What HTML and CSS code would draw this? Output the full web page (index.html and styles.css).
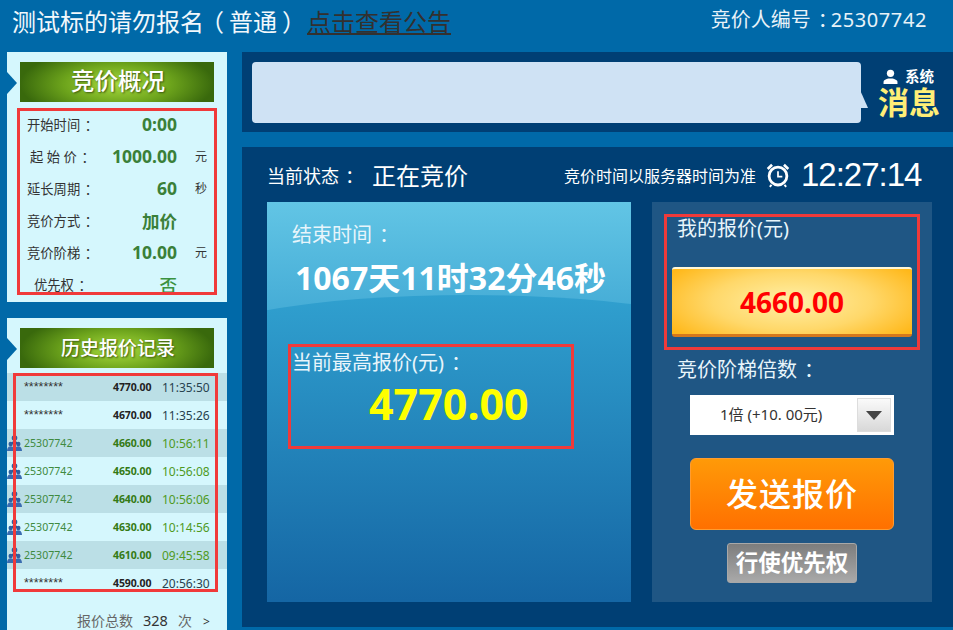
FILE: index.html
```html
<!DOCTYPE html>
<html lang="zh">
<head>
<meta charset="utf-8">
<title>竞价</title>
<link rel="stylesheet" href="styles.css">
</head>
<body>
<div class="page">
  <header class="top">
    <div class="title">测试标的请勿报名<span class="pl">（</span>普通<span class="pr">）</span><a class="notice">点击查看公告</a></div>
    <div class="bidder">竞价人编号<span class="c">：</span><span class="bidno">25307742</span></div>
  </header>
  <div class="main">
    <aside class="side">
      <section class="card overview">
        <h2 class="bar">竞价概况</h2>
        <div class="info">
          <div class="info-row"><span class="lab">开始时间<span class="c">：</span></span><b class="val">0:00</b><span class="unit"></span></div>
          <div class="info-row"><span class="lab lab-b">起 始 价<span class="c">：</span></span><b class="val">1000.00</b><span class="unit">元</span></div>
          <div class="info-row"><span class="lab">延长周期<span class="c">：</span></span><b class="val">60</b><span class="unit">秒</span></div>
          <div class="info-row"><span class="lab">竞价方式<span class="c">：</span></span><b class="val">加价</b><span class="unit"></span></div>
          <div class="info-row"><span class="lab">竞价阶梯<span class="c">：</span></span><b class="val">10.00</b><span class="unit">元</span></div>
          <div class="info-row"><span class="lab lab-c">优先权<span class="c">：</span></span><span class="val val-no">否</span><span class="unit"></span></div>
        </div>
        <div class="redbox box-info"></div>
      </section>
      <section class="card history">
        <h2 class="bar bar-sm">历史报价记录</h2>
        <div class="rows">
          <div class="row dark"><span class="who stars">********</span><b class="amt">4770.00</b><span class="tm">11:35:50</span></div>
          <div class="row"><span class="who stars">********</span><b class="amt">4670.00</b><span class="tm">11:35:26</span></div>
          <div class="row dark mine"><svg class="ppl" viewBox="0 0 15 16"><use href="#ppl"/></svg><span class="who">25307742</span><b class="amt">4660.00</b><span class="tm">10:56:11</span></div>
          <div class="row mine"><svg class="ppl" viewBox="0 0 15 16"><use href="#ppl"/></svg><span class="who">25307742</span><b class="amt">4650.00</b><span class="tm">10:56:08</span></div>
          <div class="row dark mine"><svg class="ppl" viewBox="0 0 15 16"><use href="#ppl"/></svg><span class="who">25307742</span><b class="amt">4640.00</b><span class="tm">10:56:06</span></div>
          <div class="row mine"><svg class="ppl" viewBox="0 0 15 16"><use href="#ppl"/></svg><span class="who">25307742</span><b class="amt">4630.00</b><span class="tm">10:14:56</span></div>
          <div class="row dark mine"><svg class="ppl" viewBox="0 0 15 16"><use href="#ppl"/></svg><span class="who">25307742</span><b class="amt">4610.00</b><span class="tm">09:45:58</span></div>
          <div class="row"><span class="who stars">********</span><b class="amt">4590.00</b><span class="tm">20:56:30</span></div>
        </div>
        <div class="total">报价总数<span class="count">328</span>次<span class="more">&gt;</span></div>
        <div class="redbox box-rows"></div>
      </section>
    </aside>
    <main class="content">
      <section class="msgband">
        <div class="bubble"></div>
        <div class="msglabel">
          <div class="sys"><svg class="sysicon" viewBox="0 0 14 14"><circle cx="7" cy="4" r="3.4" fill="#fff"/><path d="M0.5 14v-2.2c0-1.6 2.6-2.3 4.4-3h4.2c1.8.7 4.4 1.4 4.4 3V14z" fill="#fff"/></svg>系统</div>
          <div class="xiaoxi">消息</div>
        </div>
      </section>
      <section class="stage">
        <div class="statusline">
          <span class="st-lab">当前状态<span class="c">：</span></span><span class="st-val">正在竞价</span>
          <span class="st-note">竞价时间以服务器时间为准</span>
          <svg class="clock" viewBox="0 0 24 24" fill="none" stroke="#fff"><circle cx="12" cy="13" r="8.2" stroke-width="2.6"/><path d="M12 8.5V13.5H16" stroke-width="1.6"/><path d="M2.5 6.5 6.5 2.5M21.5 6.5 17.5 2.5" stroke-width="2.4"/><path d="M6 21l-1.5 2M18 21l1.500 2" stroke-width="1.800"/></svg>
          <span class="clocktime">12:27:14</span>
        </div>
        <div class="panels">
          <div class="left-panel">
            <div class="glow"></div>
            <div class="p-lab end-lab">结束时间<span class="c">：</span></div>
            <div class="countdown">1067天11时32分46秒</div>
            <div class="p-lab high-lab">当前最高报价(元)<span class="c">：</span></div>
            <div class="high">4770.00</div>
            <div class="redbox box-high"></div>
          </div>
          <div class="right-panel">
            <div class="p-lab my-lab">我的报价(元)</div>
            <div class="mybid">4660.00</div>
            <div class="p-lab mult-lab">竞价阶梯倍数<span class="c">：</span></div>
            <div class="select"><span class="sel-text">1倍 (+10. 00元)</span><span class="sel-btn"><i class="tri"></i></span></div>
            <div class="send">发送报价</div>
            <div class="prio">行使优先权</div>
            <div class="redbox box-my"></div>
          </div>
        </div>
      </section>
    </main>
  </div>
</div>
<svg class="defs" width="0" height="0"><defs><g id="ppl"><circle cx="7.5" cy="3" r="2.8" fill="#2f5f9f"/><path d="M4.500 9c0-2 1.500-3.300 3-3.300s3 1.300 3 3.300z" fill="#1f4f8f"/><circle cx="3.700" cy="9" r="2.200" fill="#2f5f9f"/><circle cx="11.300" cy="9" r="2.200" fill="#2f5f9f"/><path d="M0 16c0-2.800 1.500-4.800 3.700-4.800s3.700 2 3.700 4.800zM7.600 16c0-2.800 1.500-4.800 3.700-4.800S15 13.200 15 16z" fill="#3a6cb0"/></g></defs></svg>
</body>
</html>
```
FILE: styles.css
```css
* { box-sizing: border-box; }
html, body { margin: 0; padding: 0; }
body { background: #0069a8; font-family: "Noto Sans", "Noto Sans CJK SC", sans-serif; overflow: hidden; }
.page { width: 953px; height: 630px; overflow: hidden; }
.defs { position: absolute; }
.c { margin-left: .35em; letter-spacing: -.35em; }

.top { height: 52px; display: flex; justify-content: space-between; padding: 2px 26px 0 12px; color: #fff; }
.title { font-size: 24px; line-height: 40px; color: #f2f8fc; white-space: nowrap; }
.pl { font-feature-settings: "halt"; margin-left: 8px; margin-right: 5px; }
.pr { font-feature-settings: "halt"; margin-left: 5px; margin-right: 13px; }
.notice { color: #33302f; text-decoration: underline; }
.bidder { font-size: 20px; line-height: 36px; color: #e8f2f8; white-space: nowrap; }
.bidno { letter-spacing: .6px; }

.main { display: flex; padding-left: 7px; height: 578px; }
.side { width: 220px; margin-right: 15px; display: flex; flex-direction: column; gap: 16px; }
.card { position: relative; background: #d5f7fd; }
.overview { height: 250px; padding-top: 10px; }
.history { height: 312px; padding-top: 10px; }
.bar { position: relative; margin: 0 13px; padding-left: 2px; height: 40px; line-height: 38px; text-align: center; color: #fff; font-size: 23.5px; font-weight: 500; text-shadow: 1px 1px 2px #3c5a10;
  background: radial-gradient(ellipse 50% 90% at 50% 55%, #a9dc3e 0%, #6da41c 55%, #39690c 100%); }
.bar-sm { font-size: 19px; line-height: 40px; }
.card::before { content: ""; position: absolute; left: 0; top: 20px; border-style: solid; border-width: 11px 0 11px 10px; border-color: transparent transparent transparent #0069a8; }

.info { padding-top: 6px; }
.info-row { display: flex; align-items: center; height: 32px; }
.lab { width: 88px; padding-left: 20px; font-size: 13.3px; color: #333; white-space: nowrap; }
.lab-b { padding-left: 23px; }
.lab-c { padding-left: 27px; }
.val { width: 82px; text-align: right; font-size: 17.5px; color: #3a8038; font-weight: 700; white-space: nowrap; }
.val-no { font-size: 17.5px; font-weight: 500; color: #3a9240; }
.unit { margin-left: 18px; font-size: 12px; color: #333; }

.rows { margin-top: 5px; }
.row { position: relative; display: flex; align-items: center; height: 28px; padding-left: 17px; }
.row.dark { background: #bbdfe6; }
.ppl { position: absolute; left: 0; top: 6px; width: 15px; height: 16px; }
.who { width: 88px; font-size: 10.6px; color: #333; white-space: nowrap; }
.stars { font-family: "Liberation Sans", sans-serif; font-size: 12.5px; line-height: 12px; }
.amt { width: 42px; margin-left: 1px; font-size: 10.5px; color: #222; letter-spacing: -.1px; }
.tm { margin-left: 7px; font-size: 12px; color: #27424f; white-space: nowrap; }
.mine .who { color: #3f8a3f; }
.mine .amt { color: #347a14; }
.mine .tm { color: #4f9a1f; }
.total { margin-top: 13px; padding-left: 70px; font-size: 14px; line-height: 20px; color: #666; white-space: nowrap; }
.count { margin: 0 10px; font-size: 14.5px; color: #333; }
.more { margin-left: 11px; font-size: 12px; color: #333; }

.redbox { position: absolute; border: 3px solid #f03a3a; pointer-events: none; }
.box-info { left: 10px; top: 56px; width: 200px; height: 187px; }
.box-rows { left: 6px; top: 55px; width: 205px; height: 219px; }
.box-high { left: 21px; top: 142px; width: 286px; height: 105px; }
.box-my { left: 12px; top: 12px; width: 256px; height: 136px; }

.content { width: 711px; }
.msgband { height: 80px; background: #003f74; display: flex; padding: 10px 0 0 10px; }
.bubble { position: relative; width: 609px; height: 61px; background: #cfe2f4; border-radius: 4px; }
.bubble::after { content: ""; position: absolute; left: 608px; top: 28px; width: 0; height: 0; border-style: solid; border-width: 18px 0 0 8px; border-color: transparent transparent transparent #cfe2f4; }
.msglabel { margin-left: 17px; margin-top: 6px; width: 62px; }
.sys { display: flex; align-items: center; justify-content: flex-start; gap: 7px; padding-left: 5px; font-size: 14.5px; line-height: 16px; color: #fff; font-weight: 700; white-space: nowrap; }
.sysicon { width: 15px; height: 15px; }
.xiaoxi { font-size: 31px; line-height: 34px; margin-top: 1px; font-weight: 700; color: #ffee77; white-space: nowrap; }

.stage { margin-top: 15px; height: 480px; background: #003f74; padding: 0 21px 0 25px; }
.statusline { height: 55px; display: flex; align-items: center; color: #fff; white-space: nowrap; }
.st-lab { font-size: 18px; width: 105px; }
.st-val { font-size: 24px; width: 192px; }
.st-note { font-size: 16px; width: 201px; }
.clock { width: 26px; height: 26px; }
.clocktime { font-family: "Liberation Sans", sans-serif; font-size: 33px; margin-left: 10px; letter-spacing: -1px; }

.panels { display: flex; gap: 21px; }
.left-panel, .right-panel { position: relative; height: 400px; }
.left-panel { width: 364px; padding: 0 25px; overflow: hidden; background: linear-gradient(180deg, #62c5e5 0%, #45acd6 110px); }
.glow { position: absolute; left: -80px; top: 93px; width: 564px; height: 500px; background: linear-gradient(180deg, #30a0cf 0%, #1566a4 61%); border-radius: 282px 282px 0 0 / 50px 50px 0 0; }
.right-panel { width: 280px; background: #1f5684; }
.p-lab { position: relative; font-size: 20px; color: #e8f5fb; white-space: nowrap; }
.end-lab { padding-top: 18px; line-height: 30px; }
.countdown { position: relative; margin: 8px 0 0 3px; font-size: 32px; line-height: 40px; font-weight: 700; color: #fff; white-space: nowrap; }
.high-lab { margin-top: 50px; line-height: 30px; }
.high { position: relative; margin-left: 77px; font-size: 43px; line-height: 52px; font-weight: 700; color: #ff0; }

.my-lab { padding: 12px 0 0 25px; line-height: 30px; }
.mybid { margin: 23px 0 0 20px; width: 240px; height: 70px; line-height: 66px; text-align: center; font-size: 28px; font-weight: 700; color: #f00; border-radius: 3px; border-top: 2px solid #fff7d8; border-bottom: 3px solid #d5781c;
  background: radial-gradient(ellipse 60% 80% at 50% 50%, #fff0a8 0%, #ffd86a 55%, #ffb81a 100%); }
.mult-lab { margin-top: 14px; padding-left: 25px; line-height: 38px; }
.select { margin: 6px 0 0 38px; width: 204px; height: 40px; background: #fff; display: flex; align-items: center; padding-right: 3px; }
.sel-text { flex: 1; padding: 0 0 4px 30px; font-size: 15px; color: #333; white-space: nowrap; }
.sel-btn { width: 34px; height: 34px; border: 1px solid #ddd; background: linear-gradient(180deg, #fafafa, #d8d8d8); display: flex; align-items: center; justify-content: center; }
.tri { width: 0; height: 0; border-style: solid; border-width: 9px 8px 0; border-color: #444 transparent transparent; }
.send { margin: 23px 0 0 38px; width: 204px; height: 72px; line-height: 70px; text-align: center; font-size: 32px; font-weight: 500; letter-spacing: 1px; color: #fff; border-radius: 6px; border: 1px solid #ff9c30; background: linear-gradient(180deg, #ff9a08, #ff7000); }
.prio { margin: 13px 0 0 75px; width: 130px; height: 40px; line-height: 37px; text-align: center; font-size: 22.5px; font-weight: 700; color: #fff; border-radius: 3px; border: 1px solid #a8a8a8; background: linear-gradient(180deg, #7d7d7d, #a9a9a9); }
```
